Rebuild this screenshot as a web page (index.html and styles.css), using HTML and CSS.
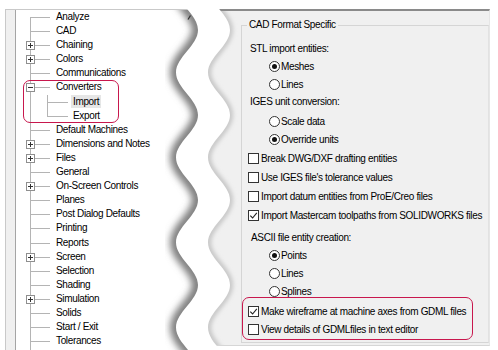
FILE: index.html
```html
<!DOCTYPE html>
<html lang="en">
<head>
    <meta charset="UTF-8">
    <title>Configuration - CAD Format Specific</title>
    <link rel="stylesheet" href="styles.css">
</head>
<body>

<div class="screen">

    <!-- Topics tree -->
    <div class="left-pane">
        <div class="tree">
            <div class="node">Analyze</div>
            <div class="node">CAD</div>
            <div class="node"><span class="toggle plus"></span>Chaining</div>
            <div class="node"><span class="toggle plus"></span>Colors</div>
            <div class="node">Communications</div>
            <div class="branch">
                <div class="node"><span class="toggle"></span>Converters</div>
                <div class="node child"><span class="selected">Import</span></div>
                <div class="node child">Export</div>
            </div>
            <div class="node">Default Machines</div>
            <div class="node"><span class="toggle plus"></span>Dimensions and Notes</div>
            <div class="node"><span class="toggle plus"></span>Files</div>
            <div class="node">General</div>
            <div class="node"><span class="toggle plus"></span>On-Screen Controls</div>
            <div class="node">Planes</div>
            <div class="node">Post Dialog Defaults</div>
            <div class="node">Printing</div>
            <div class="node">Reports</div>
            <div class="node"><span class="toggle plus"></span>Screen</div>
            <div class="node">Selection</div>
            <div class="node">Shading</div>
            <div class="node"><span class="toggle plus"></span>Simulation</div>
            <div class="node">Solids</div>
            <div class="node">Start / Exit</div>
            <div class="node">Tolerances</div>
        </div>
    </div>

    <!-- Import page -->
    <div class="right-pane">
        <fieldset class="group">
            <legend>CAD Format Specific</legend>

            <div class="caption first">STL import entities:</div>
            <div class="radio"><span class="dot on"></span>Meshes</div>
            <div class="radio"><span class="dot"></span>Lines</div>

            <div class="caption">IGES unit conversion:</div>
            <div class="options units">
                <div class="radio"><span class="dot"></span>Scale data</div>
                <div class="radio"><span class="dot on"></span>Override units</div>
            </div>

            <div class="checks">
                <div class="check"><span class="box"></span>Break DWG/DXF drafting entities</div>
                <div class="check"><span class="box"></span>Use IGES file's tolerance values</div>
                <div class="check"><span class="box"></span>Import datum entities from ProE/Creo files</div>
                <div class="check"><span class="box"><svg viewBox="0 0 9 9"><polyline points="1.3,4.6 3.6,7 7.8,1.8"/></svg></span>Import Mastercam toolpaths from SOLIDWORKS files</div>
            </div>

            <div class="caption ascii">ASCII file entity creation:</div>
            <div class="options">
                <div class="radio"><span class="dot on"></span>Points</div>
                <div class="radio"><span class="dot"></span>Lines</div>
                <div class="radio"><span class="dot"></span>Splines</div>
            </div>

            <div class="checks marked">
                <div class="check short"><span class="box"><svg viewBox="0 0 9 9"><polyline points="1.3,4.6 3.6,7 7.8,1.8"/></svg></span>Make wireframe at machine axes from GDML files</div>
                <div class="check short"><span class="box"></span>View details of GDMLfiles in text editor</div>
            </div>
        </fieldset>
    </div>

    <!-- torn edge drawn over the seam -->
    <svg class="tear" width="100" height="350" viewBox="0 0 100 350">
        <defs>
            <filter id="soft" x="-50%" y="-10%" width="200%" height="120%">
                <feGaussianBlur stdDeviation="3.5"/>
            </filter>
            <filter id="softer" x="-50%" y="-10%" width="200%" height="120%">
                <feGaussianBlur stdDeviation="2"/>
            </filter>
            <clipPath id="leftClip"><rect x="0" y="10" width="100" height="340"/></clipPath>
            <clipPath id="rightClip"><rect x="0" y="11" width="100" height="334"/></clipPath>
        </defs>
        <g clip-path="url(#leftClip)">
            <path d="M 26 -12.5 C 26 3, 48 14.5, 48 30 S 26 57, 26 72.5 S 48 99.5, 48 115 S 26 142, 26 157.5 S 48 184.5, 48 200 S 26 227, 26 242.5 S 48 269.5, 48 285 S 26 312, 26 327.5 S 48 354.5, 48 370"
                  fill="none" stroke="#7e7e7e" stroke-width="12" filter="url(#soft)"/>
        </g>
        <g clip-path="url(#rightClip)">
            <path d="M 58 -12.5 C 58 3, 80 14.5, 80 30 S 58 57, 58 72.5 S 80 99.5, 80 115 S 58 142, 58 157.5 S 80 184.5, 80 200 S 58 227, 58 242.5 S 80 269.5, 80 285 S 58 312, 58 327.5 S 80 354.5, 80 370"
                  fill="none" stroke="#c6c6c6" stroke-width="6" filter="url(#softer)"/>
        </g>
        <path d="M 26 -12.5 C 26 3, 48 14.5, 48 30 S 26 57, 26 72.5 S 48 99.5, 48 115 S 26 142, 26 157.5 S 48 184.5, 48 200 S 26 227, 26 242.5 S 48 269.5, 48 285 S 26 312, 26 327.5 S 48 354.5, 48 370
                 L 80 370 C 80 354.5, 58 343, 58 327.5 S 80 300.5, 80 285 S 58 258, 58 242.5 S 80 215.5, 80 200 S 58 173, 58 157.5 S 80 130.5, 80 115 S 58 88, 58 72.5 S 80 45.5, 80 30 S 58 3, 58 -12.5 Z"
              fill="#ffffff"/>
        <path d="M 38 19.5 L 40.5 15.5" stroke="#333" stroke-width="1.3" fill="none"/>
    </svg>

</div>

</body>
</html>
```

FILE: styles.css
```css
* {
    box-sizing: border-box;
}

body {
    margin: 0;
    background: #ffffff;
    color: #000;
    font-family: 'Liberation Sans', Arial, sans-serif;
    font-size: 10px;
    letter-spacing: -0.35px;
}

.screen {
    position: relative;
    display: flex;
    align-items: flex-start;
    width: 498px;
    height: 350px;
    padding-top: 9px;
    overflow: hidden;
}

/* ---------- left: topics tree ---------- */

.left-pane {
    display: flex;
    width: 195px;
    height: 341px;
    margin-left: 5px;
    padding-left: 9px;
    background: #f0f0f0;
    border-top: 1px solid #c9c9c9;
    border-left: 1px solid #c9c9c9;
}

.tree {
    flex: 1;
    border-left: 1px solid #a5a5a5;
    background: #ffffff linear-gradient(#b4b4b4, #b4b4b4) no-repeat 14px 7px / 1px 100%;
}

.node {
    position: relative;
    height: 14.1px;
    line-height: 14.1px;
    padding-left: 40px;
    white-space: nowrap;
}

.node::before {
    content: "";
    position: absolute;
    left: 14px;
    top: 7px;
    width: 20px;
    height: 1px;
    background: #b4b4b4;
}

.node.child {
    padding-left: 57px;
}

.node.child::before {
    left: 31px;
    width: 21px;
}

.node.child::after {
    content: "";
    position: absolute;
    left: 31px;
    top: 0;
    width: 1px;
    height: 7px;
    background: #b4b4b4;
}

.node.child + .node.child::after {
    top: -7px;
    height: 14px;
}

.toggle {
    position: absolute;
    z-index: 1;
    left: 10px;
    top: 3px;
    width: 9px;
    height: 9px;
    border: 1px solid #8f8f8f;
    background: #ffffff;
}

.toggle::before {
    content: "";
    position: absolute;
    left: 1px;
    top: 3px;
    width: 5px;
    height: 1px;
    background: #333;
}

.toggle.plus::after {
    content: "";
    position: absolute;
    left: 3px;
    top: 1px;
    width: 1px;
    height: 5px;
    background: #333;
}

.branch {
    position: relative;
}

.branch::after {
    content: "";
    position: absolute;
    left: 7px;
    top: 0;
    bottom: 0;
    width: 94px;
    border: 1.5px solid #c8174d;
    border-radius: 7px;
}

.selected {
    margin-left: -2px;
    padding: 1px 2px;
    background: #e6e6e6;
}

/* ---------- right: import options ---------- */

.right-pane {
    display: flex;
    flex-direction: column;
    width: 290px;
    height: 337px;
    padding-left: 41px;
    background: #f0f0f0;
    border-top: 2px solid #8a8a8a;
    border-right: 1px solid #e6e6e6;
    border-bottom: 1px solid #d6d6d6;
}

.group {
    flex: 1;
    min-width: 0;
    margin: 8px 0 2px 0;
    padding: 0;
    border: 1px solid #d5d5d5;
    border-right-color: #e2e2e2;
}

.group legend {
    margin-left: 5px;
    padding: 0 2px;
    line-height: 12px;
}

.caption {
    height: 17px;
    line-height: 17px;
    padding-left: 8px;
}

.caption.first {
    margin-top: 9px;
}

.caption.ascii {
    margin-top: 4px;
    padding-left: 9px;
}

.options.units {
    margin-top: 2px;
}

.radio {
    display: flex;
    align-items: center;
    gap: 1px;
    height: 18px;
    padding-left: 27px;
}

.dot {
    position: relative;
    flex: none;
    width: 11px;
    height: 11px;
    border: 1px solid #333;
    border-radius: 50%;
    background: #ffffff;
}

.dot.on::after {
    content: "";
    position: absolute;
    inset: 2px;
    border-radius: 50%;
    background: #111;
}

.checks {
    margin-top: 1px;
}

.check {
    display: flex;
    align-items: center;
    gap: 2px;
    height: 19px;
    padding-left: 6px;
    white-space: nowrap;
}

.check.short {
    height: 18px;
}

.box {
    display: flex;
    flex: none;
    width: 11px;
    height: 11px;
    border: 1px solid #333;
    background: #ffffff;
}

.box svg {
    width: 9px;
    height: 9px;
}

.box polyline {
    fill: none;
    stroke: #222;
    stroke-width: 1.1;
}

.checks.marked {
    position: relative;
    margin-top: 2.5px;
}

.checks.marked::after {
    content: "";
    position: absolute;
    left: 0;
    top: -6px;
    bottom: -1px;
    width: 229px;
    border: 1.5px solid #c8174d;
    border-radius: 7px;
}

/* torn edge drawn over the seam */
.tear {
    position: absolute;
    left: 150px;
    top: 0;
}
```
